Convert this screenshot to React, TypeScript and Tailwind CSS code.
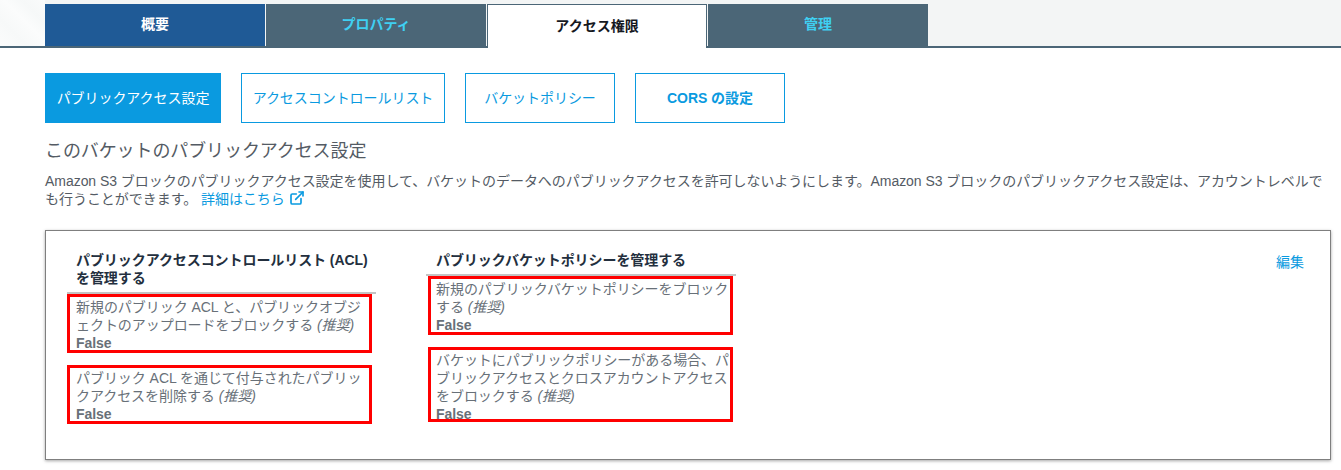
import { ExternalLink } from 'lucide-react'

const tabs = [
  { label: '概要', className: 'h-[42px] bg-[#1f5a96] text-white' },
  { label: 'プロパティ', className: 'h-[42px] bg-[#4b6677] text-[#3fd0f2]' },
  { label: 'アクセス権限', className: 'h-[44px] relative bg-white text-[#16191f] border border-b-0 border-[#4b6677]' },
  { label: '管理', className: 'h-[42px] bg-[#4b6677] text-[#3fd0f2]' },
]

const subTabs = [
  { label: 'パブリックアクセス設定', width: 'w-[176px]', active: true },
  { label: 'アクセスコントロールリスト', width: 'w-[204px]', active: false },
  { label: 'バケットポリシー', width: 'w-[150px]', active: false },
  { label: 'CORS の設定', width: 'w-[150px]', active: false },
]

function Setting({ lines, className }: { lines: string[]; className: string }) {
  return (
    <div className={`border-[3px] border-[#ff0000] pt-px overflow-hidden text-[14px] leading-[18px] tracking-[-0.05px] text-[#687078] ${className}`}>
      {lines.map((line, i) => (
        <div key={i} className="whitespace-nowrap">
          {line}
          {i === lines.length - 1 && <i> (推奨)</i>}
        </div>
      ))}
      <div className="font-bold">False</div>
    </div>
  )
}

export default function App() {
  return (
    <div className="w-[1341px] h-[470px] overflow-hidden bg-white font-['Liberation_Sans','Noto_Sans_CJK_JP',sans-serif]">
      {/* Tabs */}
      <div className="h-[48px] bg-[#f3f5f5] border-b-2 border-[#4b6677] flex">
        <div className="w-[45px] h-[46px] bg-[linear-gradient(45deg,#fbfcfc_0%,#f7f9f9_30%,#fbfcfc_55%,#f6f8f8_75%,#fafbfb_100%)]" />
        <div className="pt-[4px] flex gap-[1px]">
          {tabs.map((tab) => (
            <div key={tab.label} className={`w-[220px] flex items-center justify-center pb-px text-[14px] font-bold ${tab.className}`}>
              {tab.label}
            </div>
          ))}
        </div>
      </div>

      <div className="pl-[45px] pr-[10px]">
        {/* Sub tabs */}
        <div className="flex gap-[20px] mt-[25px]">
          {subTabs.map((tab) => (
            <div
              key={tab.label}
              className={`h-[50px] flex items-center justify-center border border-[#0a9ae0] text-[14px] tracking-[-0.05px] ${tab.width} ${
                tab.active ? 'bg-[#0a9ae0] text-white' : 'bg-white text-[#0a9ae0]'
              } ${tab.label.startsWith('CORS') ? 'font-bold' : ''}`}
            >
              {tab.label}
            </div>
          ))}
        </div>

        <h2 className="mt-[14px] text-[18px] leading-[28px] tracking-[-0.1px] text-[#545b64]">このバケットのパブリックアクセス設定</h2>
        <p className="mt-[7px] text-[14px] leading-[18px] tracking-[-0.04px] text-[#545b64] whitespace-nowrap">
          Amazon S3 ブロックのパブリックアクセス設定を使用して、バケットのデータへのパブリックアクセスを許可しないようにします。Amazon S3 ブロックのパブリックアクセス設定は、アカウントレベルで
          <br />
          も行うことができます。{' '}
          <a className="text-[#0a9ae0] inline-flex items-center gap-[4px]">
            詳細はこちら
            <ExternalLink size={16} strokeWidth={2.5} className="-mt-[3px]" />
          </a>
        </p>

        {/* Panel */}
        <div className="relative mt-[22px] h-[230px] border border-[#7f7f7f] shadow-[0_1px_3px_rgba(0,0,0,0.35)] pt-[20px] pl-[21px] flex">
          <div className="w-[361px]">
            <div className="w-[309px] border-b-2 border-[#c4c4c4] pl-[9px] pb-[5px] text-[14px] leading-[18px] tracking-[-0.07px] font-bold text-[#232f3e]">
              パブリックアクセスコントロールリスト (ACL)
              <br />
              を管理する
            </div>
            <div className="flex flex-col gap-[12px] w-[305px]">
              <Setting lines={['新規のパブリック ACL と、パブリックオブジ', 'ェクトのアップロードをブロックする']} className="h-[59px] pl-[6px]" />
              <Setting lines={['パブリック ACL を通じて付与されたパブリッ', 'クアクセスを削除する']} className="h-[59px] pl-[6px]" />
            </div>
          </div>
          <div className="w-[320px]">
            <div className="-ml-[2px] w-[310px] border-b-2 border-[#c4c4c4] pl-[10px] pb-[5px] text-[14px] leading-[18px] tracking-[-0.07px] font-bold text-[#232f3e]">
              パブリックバケットポリシーを管理する
            </div>
            <div className="flex flex-col gap-[12px] w-[305px]">
              <Setting lines={['新規のパブリックバケットポリシーをブロック', 'する']} className="h-[59px] pl-[5px]" />
              <Setting lines={['バケットにパブリックポリシーがある場合、パ', 'ブリックアクセスとクロスアカウントアクセス', 'をブロックする']} className="h-[75px] pl-[5px]" />
            </div>
          </div>
          <a className="absolute right-[26px] top-[22px] text-[14px] leading-[18px] text-[#0a9ae0]">編集</a>
        </div>
      </div>
    </div>
  )
}
